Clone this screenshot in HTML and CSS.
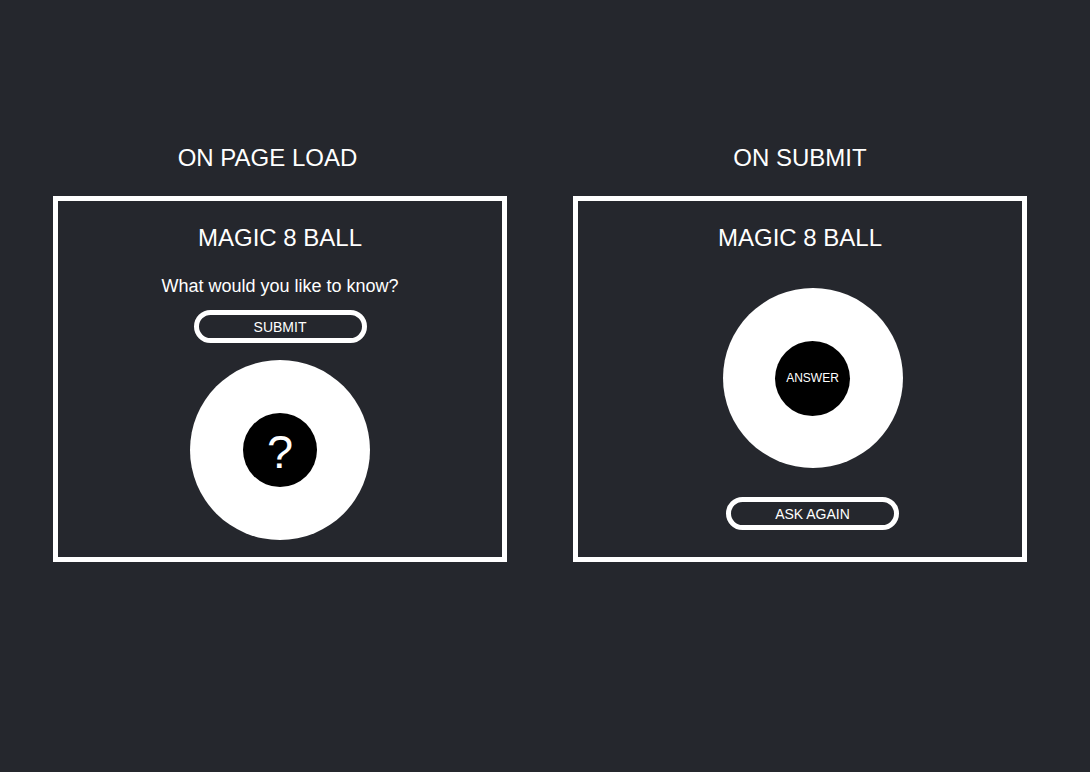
FILE: index.html
```html
<!DOCTYPE html>
<html lang="en">
<head>
<meta charset="utf-8">
<title>Magic 8 Ball</title>
<link rel="stylesheet" href="styles.css">
</head>
<body>
<main class="page">
  <section class="column">
    <h2 class="state-title state-title--left">ON PAGE LOAD</h2>
    <div class="panel">
      <h1 class="app-title">MAGIC 8 BALL</h1>
      <p class="question">What would you like to know?</p>
      <button class="pill-btn pill-btn--submit">SUBMIT</button>
      <div class="ball ball--load">
        <div class="ball-window"><span class="qmark">?</span></div>
      </div>
    </div>
  </section>
  <section class="column">
    <h2 class="state-title">ON SUBMIT</h2>
    <div class="panel">
      <h1 class="app-title">MAGIC 8 BALL</h1>
      <div class="answer-group">
        <div class="ball ball--answer">
          <div class="ball-window ball-window--answer"><span class="answer">ANSWER</span></div>
        </div>
        <button class="pill-btn pill-btn--again">ASK AGAIN</button>
      </div>
    </div>
  </section>
</main>
</body>
</html>
```

FILE: styles.css
```css
html, body {
  margin: 0;
  padding: 0;
}
body {
  background: #25272d;
  color: #ffffff;
  font-family: "Liberation Sans", Arial, Helvetica, sans-serif;
  width: 1090px;
  height: 772px;
  overflow: hidden;
}
.page {
  display: flex;
  gap: 66px;
  padding: 146px 0 0 53px;
}
.column {
  width: 454px;
  display: flex;
  flex-direction: column;
}
.state-title {
  margin: 0 0 26px;
  font-size: 24px;
  line-height: 24px;
  font-weight: normal;
  text-align: center;
}
.state-title--left {
  padding-right: 25px;
}
.panel {
  box-sizing: border-box;
  height: 366px;
  border: 5px solid #ffffff;
  display: flex;
  flex-direction: column;
  align-items: center;
  padding-top: 25px;
}
.app-title {
  margin: 0;
  font-size: 24px;
  line-height: 24px;
  font-weight: normal;
}
.question {
  margin: 27px 0 0;
  font-size: 18px;
  line-height: 18px;
}
.pill-btn {
  box-sizing: border-box;
  width: 173px;
  height: 33px;
  border: 5px solid #ffffff;
  border-radius: 17px;
  background: transparent;
  color: #ffffff;
  font-family: "Liberation Sans", Arial, Helvetica, sans-serif;
  font-size: 14px;
  padding: 0;
  display: flex;
  align-items: center;
  justify-content: center;
}
.pill-btn--submit {
  margin-top: 15px;
}
.ball {
  width: 180px;
  height: 180px;
  border-radius: 50%;
  background: #ffffff;
  display: flex;
  align-items: center;
  justify-content: center;
}
.ball--load {
  margin-top: 17px;
}
.ball-window {
  width: 74px;
  height: 74px;
  border-radius: 50%;
  background: #000000;
  display: flex;
  align-items: center;
  justify-content: center;
}
.ball-window--answer {
  width: 75px;
  height: 75px;
}
.qmark {
  font-size: 47px;
  line-height: 47px;
  color: #ffffff;
  margin-top: 3px;
}
.answer {
  font-size: 12px;
  line-height: 12px;
  color: #ffffff;
}
.answer-group {
  display: flex;
  flex-direction: column;
  align-items: center;
  margin-top: 38px;
  margin-left: 25px;
}
.pill-btn--again {
  margin-top: 29px;
}
```
